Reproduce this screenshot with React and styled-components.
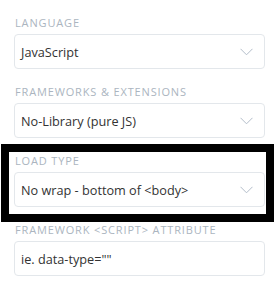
import React from "react";
import styled, { createGlobalStyle } from "styled-components";

const Global = createGlobalStyle`
  html, body { margin: 0; padding: 0; background: #fff; }
  body { font-family: "Open Sans", "Liberation Sans", sans-serif; }
`;

const Panel = styled.div`
  width: 279px;
  height: 291px;
  box-sizing: border-box;
  padding: 15px 14px 0 14px;
  display: flex;
  flex-direction: column;
  gap: 15px;
`;

const Group = styled.div`
  position: relative;
  display: flex;
  flex-direction: column;
  gap: 4px;
`;

const Label = styled.div`
  font-size: 11px;
  line-height: 15px;
  letter-spacing: 0.85px;
  text-transform: uppercase;
  color: #abb5c0;
  padding-left: 1px;
  white-space: nowrap;
`;

const Box = styled.div`
  height: 35px;
  box-sizing: border-box;
  border: 1px solid #e3e7eb;
  border-radius: 4px;
  background: #fff;
  display: flex;
  align-items: center;
  justify-content: space-between;
  padding: 0 11px 0 6px;
  font-size: 12.7px;
  color: #333;
`;

const Input = styled.input`
  height: 35px;
  box-sizing: border-box;
  border: 1px solid #e3e7eb;
  border-radius: 4px;
  background: #fff;
  padding: 0 6px;
  font-family: inherit;
  font-size: 12.7px;
  color: #333;
  outline: none;
  &::placeholder { color: #333; opacity: 1; }
`;

const Highlight = styled.div`
  position: absolute;
  top: -9px;
  left: -13px;
  right: -9px;
  bottom: -15px;
  border: 8px solid #000;
  pointer-events: none;
`;

const Chevron = () => (
  <svg width="13" height="8" viewBox="0 0 13 8" fill="none">
    <path d="M0.5 0.8 L6.5 6.8 L12.5 0.8" stroke="#b3bdc9" strokeWidth="1" />
  </svg>
);

const Select = ({ value }) => (
  <Box>
    <span>{value}</span>
    <Chevron />
  </Box>
);

export default function App() {
  return (
    <>
      <Global />
      <Panel>
        <Group>
          <Label>Language</Label>
          <Select value="JavaScript" />
        </Group>
        <Group>
          <Label>Frameworks &amp; Extensions</Label>
          <Select value="No-Library (pure JS)" />
        </Group>
        <Group>
          <Label>Load Type</Label>
          <Select value="No wrap - bottom of <body>" />
          <Highlight />
        </Group>
        <Group>
          <Label>Framework &lt;script&gt; attribute</Label>
          <Input placeholder={'ie. data-type=""'} />
        </Group>
      </Panel>
    </>
  );
}
